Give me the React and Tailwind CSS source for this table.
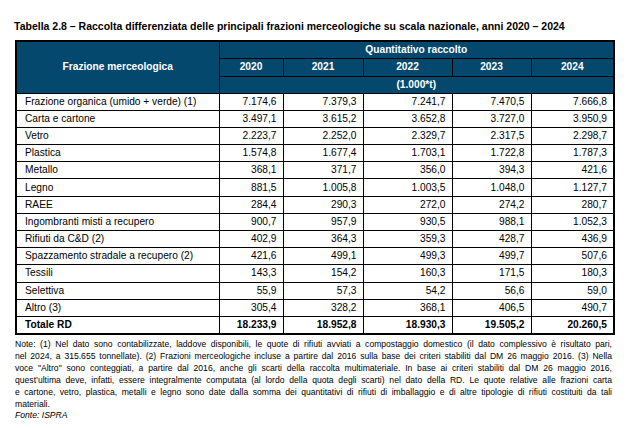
import React from 'react';

const rows = [
  ['Frazione organica (umido + verde) (1)', '7.174,6', '7.379,3', '7.241,7', '7.470,5', '7.666,8'],
  ['Carta e cartone', '3.497,1', '3.615,2', '3.652,8', '3.727,0', '3.950,9'],
  ['Vetro', '2.223,7', '2.252,0', '2.329,7', '2.317,5', '2.298,7'],
  ['Plastica', '1.574,8', '1.677,4', '1.703,1', '1.722,8', '1.787,3'],
  ['Metallo', '368,1', '371,7', '356,0', '394,3', '421,6'],
  ['Legno', '881,5', '1.005,8', '1.003,5', '1.048,0', '1.127,7'],
  ['RAEE', '284,4', '290,3', '272,0', '274,2', '280,7'],
  ['Ingombranti misti a recupero', '900,7', '957,9', '930,5', '988,1', '1.052,3'],
  ['Rifiuti da C&D (2)', '402,9', '364,3', '359,3', '428,7', '436,9'],
  ['Spazzamento stradale a recupero (2)', '421,6', '499,1', '499,3', '499,7', '507,6'],
  ['Tessili', '143,3', '154,2', '160,3', '171,5', '180,3'],
  ['Selettiva', '55,9', '57,3', '54,2', '56,6', '59,0'],
  ['Altro (3)', '305,4', '328,2', '368,1', '406,5', '490,7'],
];

const total = ['Totale RD', '18.233,9', '18.952,8', '18.930,3', '19.505,2', '20.260,5'];

const years = ['2020', '2021', '2022', '2023', '2024'];

const noteLines = [
  'Note: (1) Nel dato sono contabilizzate, laddove disponibili, le quote di rifiuti avviati a compostaggio domestico (il dato complessivo è risultato pari,',
  'nel 2024, a 315.655 tonnellate). (2) Frazioni merceologiche incluse a partire dal 2016 sulla base dei criteri stabiliti dal DM 26 maggio 2016. (3) Nella',
  'voce "Altro" sono conteggiati, a partire dal 2016, anche gli scarti della raccolta multimateriale. In base ai criteri stabiliti dal DM 26 maggio 2016,',
  'quest\u2019ultima deve, infatti, essere integralmente computata (al lordo della quota degli scarti) nel dato della RD. Le quote relative alle frazioni carta',
  'e cartone, vetro, plastica, metalli e legno sono date dalla somma dei quantitativi di rifiuti di imballaggio e di altre tipologie di rifiuti costituiti da tali',
];

const App = () => {
  return (
    <div className="w-[628px] h-[428px] bg-white pt-[20px] px-[14px] text-black font-['Liberation_Sans',Arial,sans-serif]">
      <h1 className="text-[10.5px] leading-[13px] font-bold whitespace-nowrap">
        Tabella 2.8 – Raccolta differenziata delle principali frazioni merceologiche su scala nazionale, anni 2020 – 2024
      </h1>

      <table className="mt-[7px] ml-[1px] w-[598px] table-fixed border-collapse border-2 border-black text-[10.2px] leading-[12px]">
        <colgroup>
          <col className="w-[203px]" />
          <col className="w-[64px]" />
          <col className="w-[80px]" />
          <col className="w-[89px]" />
          <col className="w-[79px]" />
          <col className="w-[83px]" />
        </colgroup>
        <thead className="bg-[#05486e] text-white font-bold">
          <tr className="h-[17px]">
            <th rowSpan={3} className="border border-black font-bold">Frazione merceologica</th>
            <th colSpan={5} className="border border-black font-bold">Quantitativo raccolto</th>
          </tr>
          <tr className="h-[18px]">
            {years.map((y) => (
              <th key={y} className="border border-black font-bold">{y}</th>
            ))}
          </tr>
          <tr className="h-[17px]">
            <th colSpan={5} className="border border-black font-bold">(1.000*t)</th>
          </tr>
        </thead>
        <tbody>
          {rows.map((r) => (
            <tr key={r[0]} className="h-[17.2px]">
              <td className="border border-black pl-[8px] whitespace-nowrap">{r[0]}</td>
              {r.slice(1).map((v, i) => (
                <td key={i} className="border border-black text-right pr-[6px]">{v}</td>
              ))}
            </tr>
          ))}
          <tr className="h-[17.2px] font-bold">
            <td className="border border-black pl-[8px]">{total[0]}</td>
            {total.slice(1).map((v, i) => (
              <td key={i} className="border border-black text-right pr-[6px]">{v}</td>
            ))}
          </tr>
        </tbody>
      </table>

      <div className="mt-[3px] ml-[1px] w-[597px] text-[8.6px] leading-[12px]">
        {noteLines.map((l, i) => (
          <div key={i} className="whitespace-nowrap text-justify [text-align-last:justify]">{l}</div>
        ))}
        <div>materiali.</div>
        <div className="italic leading-[10px]">Fonte: ISPRA</div>
      </div>
    </div>
  );
};

export default App;
